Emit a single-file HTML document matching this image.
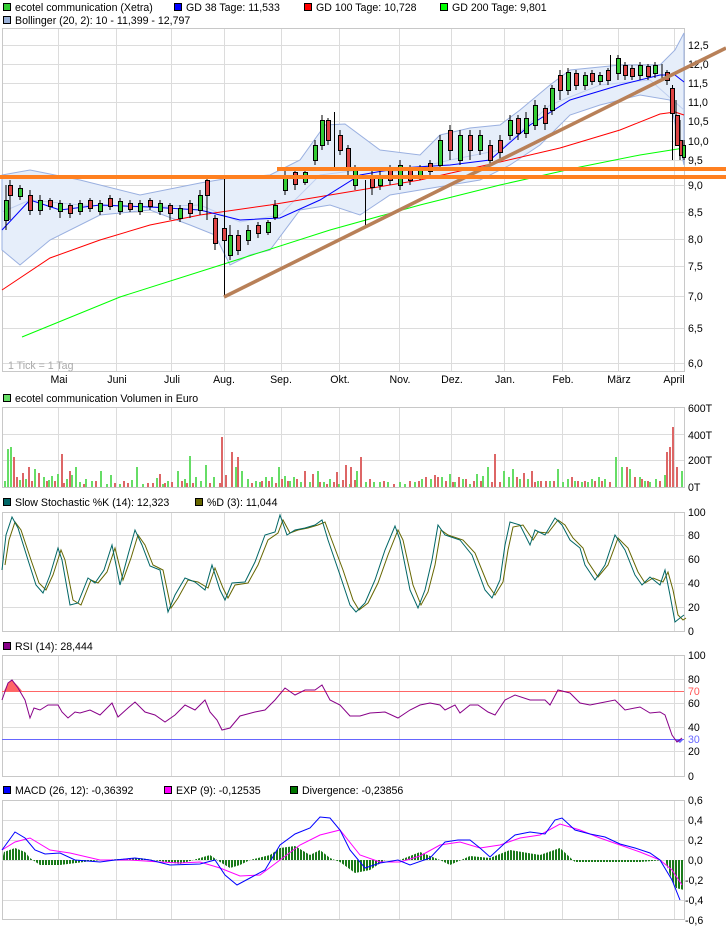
<!DOCTYPE html>
<html><head><meta charset="utf-8"><style>
body{margin:0;background:#fff;width:726px;height:928px;overflow:hidden;font-family:"Liberation Sans",sans-serif;}
svg{display:block}
text{font-family:"Liberation Sans",sans-serif;font-size:10.6px;fill:#000}
</style></head><body>
<svg width="726" height="928" viewBox="0 0 726 928" xmlns="http://www.w3.org/2000/svg">
<defs>
<pattern id="hs" width="3" height="10" patternUnits="userSpaceOnUse"><rect x="0" y="0" width="2" height="10" fill="#1a7a1a"/></pattern>
</defs>
<g stroke="#000" stroke-width="1">
<rect x="3.5" y="3.5" width="7" height="7" fill="#3c3"/>
<rect x="174.5" y="3.5" width="7" height="7" fill="#00f"/>
<rect x="304.5" y="3.5" width="7" height="7" fill="#f00"/>
<rect x="440.5" y="3.5" width="7" height="7" fill="#0f0"/>
<rect x="3.5" y="16.5" width="7" height="7" fill="#9ab0d8"/>
<rect x="3.5" y="394.5" width="7" height="7" fill="#6d6"/>
<rect x="3.5" y="498.5" width="7" height="7" fill="#066"/>
<rect x="195.5" y="498.5" width="7" height="7" fill="#660"/>
<rect x="3.5" y="642.5" width="7" height="7" fill="#808"/>
<rect x="3.5" y="786.5" width="7" height="7" fill="#00f"/>
<rect x="164.5" y="786.5" width="7" height="7" fill="#f0f"/>
<rect x="290.5" y="786.5" width="7" height="7" fill="#070"/>
</g>
<text x="15" y="11">ecotel communication (Xetra)</text>
<text x="186" y="11">GD 38 Tage: 11,533</text>
<text x="316" y="11">GD 100 Tage: 10,728</text>
<text x="452" y="11">GD 200 Tage: 9,801</text>
<text x="15" y="24">Bollinger (20, 2): 10 - 11,399 - 12,797</text>
<text x="15" y="402">ecotel communication Volumen in Euro</text>
<text x="15" y="506">Slow Stochastic %K (14): 12,323</text>
<text x="207" y="506">%D (3): 11,044</text>
<text x="15" y="650">RSI (14): 28,444</text>
<text x="15" y="794">MACD (26, 12): -0,36392</text>
<text x="176" y="794">EXP (9): -0,12535</text>
<text x="302" y="794">Divergence: -0,23856</text>

<g stroke="#dcdcdc" stroke-width="1" fill="none">
<path d="M58.5 28V372M116.5 28V372M171.5 28V372M224.5 28V372M281.5 28V372M339.5 28V372M399.5 28V372M451.5 28V372M504.5 28V372M562.5 28V372M618.5 28V372M674.5 28V372"/>
<path d="M2 45.5H684M2 64.5H684M2 83.5H684M2 102.5H684M2 121.5H684M2 141.5H684M2 160.5H684M2 185.5H684M2 212.5H684M2 239.5H684M2 266.5H684M2 296.5H684M2 328.5H684M2 363.5H684"/>
<path d="M58.5 407V487M116.5 407V487M171.5 407V487M224.5 407V487M281.5 407V487M339.5 407V487M399.5 407V487M451.5 407V487M504.5 407V487M562.5 407V487M618.5 407V487M674.5 407V487M2 434.5H684M2 460.5H684"/>
<path d="M58.5 512V631M116.5 512V631M171.5 512V631M224.5 512V631M281.5 512V631M339.5 512V631M399.5 512V631M451.5 512V631M504.5 512V631M562.5 512V631M618.5 512V631M674.5 512V631M2 535.5H684M2 559.5H684M2 583.5H684M2 607.5H684"/>
<path d="M58.5 655V776M116.5 655V776M171.5 655V776M224.5 655V776M281.5 655V776M339.5 655V776M399.5 655V776M451.5 655V776M504.5 655V776M562.5 655V776M618.5 655V776M674.5 655V776M2 679.5H684M2 703.5H684M2 727.5H684M2 751.5H684"/>
<path d="M58.5 800V919M116.5 800V919M171.5 800V919M224.5 800V919M281.5 800V919M339.5 800V919M399.5 800V919M451.5 800V919M504.5 800V919M562.5 800V919M618.5 800V919M674.5 800V919M2 820.5H684M2 840.5H684M2 880.5H684M2 900.5H684"/>
</g>
<g stroke="#c8c8c8" fill="none">
<rect x="2.5" y="28.5" width="682" height="343"/>
<rect x="2.5" y="407.5" width="682" height="80"/>
<rect x="2.5" y="512.5" width="682" height="119"/>
<rect x="2.5" y="655.5" width="682" height="121"/>
<rect x="2.5" y="800.5" width="682" height="119"/>
</g>

<g>
<text x="688" y="49">12,5</text><text x="688" y="68">12,0</text><text x="688" y="87">11,5</text><text x="688" y="106">11,0</text><text x="688" y="125">10,5</text><text x="688" y="145">10,0</text><text x="688" y="164">9,5</text><text x="688" y="189">9,0</text><text x="688" y="216">8,5</text><text x="688" y="243">8,0</text><text x="688" y="270">7,5</text><text x="688" y="300">7,0</text><text x="688" y="332">6,5</text><text x="688" y="367">6,0</text>
<text x="688" y="412">600T</text><text x="688" y="439">400T</text><text x="688" y="464">200T</text><text x="688" y="491">0T</text>
<text x="688" y="516">100</text><text x="688" y="539">80</text><text x="688" y="563">60</text><text x="688" y="587">40</text><text x="688" y="611">20</text><text x="688" y="635">0</text>
<text x="688" y="659">100</text><text x="688" y="683">80</text><text x="688" y="695" style="fill:#f55">70</text><text x="688" y="707">60</text><text x="688" y="731">40</text><text x="688" y="743" style="fill:#66f">30</text><text x="688" y="755">20</text><text x="688" y="780">0</text>
<text x="688" y="804">0,6</text><text x="688" y="824">0,4</text><text x="688" y="844">0,2</text><text x="688" y="864">0,0</text><text x="685" y="884">-0,2</text><text x="685" y="904">-0,4</text><text x="685" y="924">-0,6</text>
</g>
<g text-anchor="middle">
<text x="59" y="383">Mai</text><text x="117" y="383">Juni</text><text x="172" y="383">Juli</text><text x="224" y="383">Aug.</text><text x="281" y="383">Sep.</text><text x="340" y="383">Okt.</text><text x="400" y="383">Nov.</text><text x="452" y="383">Dez.</text><text x="505" y="383">Jan.</text><text x="563" y="383">Feb.</text><text x="619" y="383">März</text><text x="674" y="383">April</text>
</g>
<text x="8" y="369" style="fill:#aaa">1 Tick = 1 Tag</text>

<polygon fill="#e6eefa" stroke="#9ab0e0" stroke-width="1" points="2,175 30,170 80,180 140,195 200,183 230,178 270,175 300,160 325,125 345,124 380,150 420,155 440,135 470,128 500,125 520,110 550,85 570,70 620,65 660,65 675,50 684,33 684,165 670,100 640,95 600,105 570,115 540,145 510,165 480,180 450,185 420,190 390,195 360,215 330,205 300,210 270,250 250,255 230,265 215,235 190,225 150,210 100,215 50,240 20,265 2,250"/>
<polyline fill="none" stroke="#c0d0f0" points="2,212 30,200 80,205 140,207 200,205 240,222 280,215 320,175 360,170 400,172 450,160 500,150 550,105 600,85 650,80 684,110"/>
<polyline fill="none" stroke="#0f0" points="22,337 120,297 224,264 330,230 420,205 500,185 580,167 640,155 684,148"/>
<polyline fill="none" stroke="#f00" points="2,290 50,258 100,240 150,225 200,215 270,205 330,195 420,180 500,162 560,148 620,130 660,114 675,112 684,115"/>
<polyline fill="none" stroke="#00f" points="2,230 30,200 60,210 100,205 150,207 200,210 240,220 280,218 320,200 360,175 400,168 450,165 490,160 530,125 570,100 620,85 660,75 675,75 684,82"/>
<g stroke="#000" stroke-width="1">
<path d="M224.5 177V297M365.5 180V225M334.5 112V170M672.5 85V160M610.5 55V80"/>
<path d="M6 230V185M10 220V180M20 200V185M30 215V190M40 215V195M50 210V198M60 218V200M70 218V203M80 215V200M90 212V198M100 215V200M110 210V195M120 215V198M130 212V200M140 215V200M150 210V198M160 215V200M170 220V203M180 222V205M190 218V200M200 215V190M207 220V178M215 250V215M230 260V225M238 255V230M248 245V225M258 238V222M268 235V220M275 220V200M285 195V170M295 190V170M305 185V168M315 165V140M322 150V115M328 145V118M340 155V130M348 175V145M355 190V165M372 195V170M380 190V170M390 185V165M400 190V160M410 185V165M420 180V165M430 175V160M440 170V135M450 160V125M460 165V130M470 160V130M480 155V130M490 165V140M500 160V135M510 140V115M518 140V115M526 138V112M535 130V100M545 130V105M552 115V85M560 100V70M568 95V68M576 90V70M585 90V72M592 85V70M600 85V72M608 85V68M618 80V55M625 80V62M632 80V65M640 80V62M648 80V64M655 78V62M662 80V64M667 85V70M676 130V100M680 160V120M684 160V140"/>
</g>
<g stroke="#000" stroke-width="1">
<g fill="#3c3">
<rect x="4.5" y="200.5" width="4" height="20"/><rect x="18.5" y="188.5" width="4" height="8"/><rect x="38.5" y="200.5" width="4" height="10"/><rect x="58.5" y="203.5" width="4" height="8"/><rect x="78.5" y="203.5" width="4" height="8"/><rect x="98.5" y="203.5" width="4" height="8"/><rect x="118.5" y="201.5" width="4" height="10"/><rect x="138.5" y="203.5" width="4" height="8"/><rect x="158.5" y="203.5" width="4" height="8"/><rect x="178.5" y="208.5" width="4" height="10"/><rect x="198.5" y="195.5" width="4" height="15"/><rect x="228.5" y="235.5" width="4" height="20"/><rect x="246.5" y="230.5" width="4" height="10"/><rect x="266.5" y="222.5" width="4" height="10"/><rect x="273.5" y="205.5" width="4" height="12"/><rect x="283.5" y="175.5" width="4" height="15"/><rect x="303.5" y="172.5" width="4" height="10"/><rect x="313.5" y="145.5" width="4" height="15"/><rect x="320.5" y="120.5" width="4" height="25"/><rect x="353.5" y="170.5" width="4" height="15"/><rect x="378.5" y="175.5" width="4" height="10"/><rect x="398.5" y="165.5" width="4" height="20"/><rect x="418.5" y="168.5" width="4" height="8"/><rect x="438.5" y="140.5" width="4" height="25"/><rect x="458.5" y="135.5" width="4" height="25"/><rect x="478.5" y="135.5" width="4" height="15"/><rect x="508.5" y="120.5" width="4" height="15"/><rect x="524.5" y="118.5" width="4" height="15"/><rect x="533.5" y="105.5" width="4" height="20"/><rect x="550.5" y="88.5" width="4" height="22"/><rect x="566.5" y="72.5" width="4" height="18"/><rect x="583.5" y="75.5" width="4" height="10"/><rect x="598.5" y="75.5" width="4" height="6"/><rect x="616.5" y="58.5" width="4" height="15"/><rect x="638.5" y="65.5" width="4" height="10"/><rect x="653.5" y="65.5" width="4" height="8"/><rect x="682.5" y="145.5" width="3" height="12"/>
</g>
<g fill="#d44">
<rect x="8.5" y="185.5" width="4" height="10"/><rect x="28.5" y="195.5" width="4" height="15"/><rect x="48.5" y="200.5" width="4" height="6"/><rect x="68.5" y="205.5" width="4" height="8"/><rect x="88.5" y="200.5" width="4" height="8"/><rect x="108.5" y="198.5" width="4" height="8"/><rect x="128.5" y="203.5" width="4" height="6"/><rect x="148.5" y="200.5" width="4" height="6"/><rect x="168.5" y="205.5" width="4" height="8"/><rect x="188.5" y="203.5" width="4" height="10"/><rect x="205.5" y="180.5" width="4" height="15"/><rect x="213.5" y="218.5" width="4" height="25"/><rect x="222.5" y="228.5" width="4" height="12"/><rect x="236.5" y="235.5" width="4" height="15"/><rect x="256.5" y="225.5" width="4" height="8"/><rect x="293.5" y="172.5" width="4" height="12"/><rect x="326.5" y="120.5" width="4" height="20"/><rect x="338.5" y="135.5" width="4" height="15"/><rect x="346.5" y="148.5" width="4" height="20"/><rect x="370.5" y="175.5" width="4" height="12"/><rect x="388.5" y="170.5" width="4" height="10"/><rect x="408.5" y="168.5" width="4" height="12"/><rect x="428.5" y="163.5" width="4" height="8"/><rect x="448.5" y="130.5" width="4" height="20"/><rect x="468.5" y="135.5" width="4" height="15"/><rect x="488.5" y="145.5" width="4" height="15"/><rect x="498.5" y="140.5" width="4" height="12"/><rect x="516.5" y="118.5" width="4" height="15"/><rect x="543.5" y="108.5" width="4" height="15"/><rect x="558.5" y="75.5" width="4" height="15"/><rect x="574.5" y="73.5" width="4" height="12"/><rect x="590.5" y="73.5" width="4" height="8"/><rect x="606.5" y="70.5" width="4" height="10"/><rect x="623.5" y="65.5" width="4" height="10"/><rect x="630.5" y="68.5" width="4" height="8"/><rect x="646.5" y="66.5" width="4" height="10"/><rect x="665.5" y="72.5" width="4" height="8"/><rect x="670.5" y="88.5" width="4" height="25"/><rect x="675.5" y="115.5" width="4" height="30"/><rect x="679.5" y="140.5" width="3" height="15"/>
</g>
</g>
<line x1="224" y1="297" x2="726" y2="48" stroke="#b88058" stroke-width="3.5"/>
<rect x="0" y="175" width="726" height="4" fill="#ff8020"/>
<rect x="277" y="167" width="449" height="4" fill="#ff8020"/>

<path fill="none" stroke="#6d6" stroke-width="2" d="M5 487v-6M8 487v-38M11 487v-40M20 487v-7M26 487v-8M35 487v-18M44 487v-10M49 487v-7M52 487v-11M58 487v-13M67 487v-8M72 487v-12M76 487v-20M80 487v-5M86 487v-8M92 487v-6M101 487v-16M107 487v-3M111 487v-12M120 487v-3M132 487v-7M137 487v-20M143 487v-3M157 487v-9M163 487v-3M168 487v-6M178 487v-16M185 487v-8M190 487v-31M196 487v-10M201 487v-6M206 487v-22M214 487v-10M236 487v-20M242 487v-16M248 487v-8M256 487v-6M260 487v-5M266 487v-10M272 487v-10M279 487v-20M285 487v-11M290 487v-6M294 487v-10M301 487v-5M310 487v-5M318 487v-16M324 487v-5M330 487v-8M339 487v-3M350 487v-3M357 487v-16M366 487v-5M374 487v-5M380 487v-5M388 487v-5M400 487v-5M405 487v-3M415 487v-5M422 487v-8M431 487v-8M442 487v-10M450 487v-13M455 487v-5M463 487v-8M470 487v-3M477 487v-13M483 487v-11M488 487v-20M504 487v-16M509 487v-10M513 487v-18M520 487v-8M528 487v-8M538 487v-6M550 487v-6M558 487v-18M563 487v-5M568 487v-8M575 487v-6M582 487v-5M588 487v-5M592 487v-8M599 487v-10M605 487v-8M616 487v-30M622 487v-20M630 487v-18M640 487v-10M645 487v-6M650 487v-5M656 487v-8M665 487v-12M682 487v-16"/>
<path fill="none" stroke="#d66" stroke-width="2" d="M14 487v-30M17 487v-10M23 487v-14M29 487v-20M32 487v-6M39 487v-14M47 487v-6M55 487v-6M62 487v-33M64 487v-4M70 487v-16M84 487v-3M96 487v-6M115 487v-4M124 487v-6M128 487v-4M148 487v-4M153 487v-4M160 487v-13M165 487v-4M172 487v-5M182 487v-6M187 487v-4M193 487v-4M210 487v-4M220 487v-4M222 487v-50M226 487v-12M232 487v-35M238 487v-30M252 487v-4M262 487v-6M269 487v-6M276 487v-4M282 487v-8M288 487v-6M297 487v-8M305 487v-16M313 487v-13M320 487v-5M327 487v-3M334 487v-5M337 487v-15M343 487v-7M346 487v-22M351 487v-20M355 487v-7M361 487v-30M370 487v-8M384 487v-6M394 487v-3M410 487v-6M419 487v-6M426 487v-10M435 487v-12M438 487v-10M446 487v-6M453 487v-5M459 487v-10M466 487v-8M474 487v-6M481 487v-6M492 487v-5M495 487v-33M500 487v-5M517 487v-10M524 487v-14M532 487v-16M535 487v-5M541 487v-6M546 487v-6M554 487v-6M572 487v-10M578 487v-6M585 487v-6M595 487v-6M602 487v-6M610 487v-5M627 487v-20M635 487v-10M642 487v-8M648 487v-6M660 487v-6M667 487v-35M670 487v-40M673 487v-60M677 487v-20"/>

<polyline fill="none" stroke="#660" points="5,565 9,540 15,522 21,530 31,560 39,583 46,590 53,575 61,550 65,560 73,600 81,605 91,580 98,583 107,572 115,548 123,580 131,558 138,535 145,545 153,565 163,570 171,608 178,598 188,580 198,582 208,588 215,568 223,588 228,598 235,585 248,583 258,565 268,540 278,533 283,520 290,533 298,530 308,528 318,525 325,522 331,538 343,570 353,600 359,610 368,603 378,583 388,555 398,530 403,540 413,585 421,605 428,592 435,565 441,530 448,535 463,540 475,553 488,585 495,595 503,582 508,550 513,527 523,525 533,540 538,532 548,533 558,520 565,525 573,538 583,548 588,562 598,577 608,565 618,538 628,548 638,572 645,583 653,578 663,582 668,572 673,590 678,615 683,620 686,618"/>
<polyline fill="none" stroke="#066" points="2,570 6,535 12,517 18,528 28,560 36,585 43,593 50,575 58,548 62,560 70,605 78,603 88,578 95,583 104,570 112,545 120,585 128,555 135,530 142,545 150,566 160,570 168,612 175,595 185,578 195,582 205,590 212,565 220,590 225,600 232,583 245,582 255,562 265,535 275,532 280,515 287,535 295,530 305,528 315,525 322,520 328,540 340,575 350,605 356,612 365,603 375,580 385,550 395,526 400,540 410,590 418,608 425,590 432,560 438,525 445,535 460,540 472,555 485,590 492,598 500,580 505,545 510,522 520,525 530,545 535,530 545,535 555,518 562,525 570,540 580,548 585,565 595,580 605,565 615,535 625,550 635,575 642,585 650,577 660,585 665,570 670,595 675,622 680,618 684,615"/>

<line x1="2" y1="691.5" x2="684" y2="691.5" stroke="#f66"/>
<line x1="2" y1="739.5" x2="684" y2="739.5" stroke="#66f"/>
<polygon fill="#f66" points="4,691 8,683 12,680 18,686 22,691"/>
<polygon fill="#66f" points="674,739 677,741 680,743 684,739"/>
<polyline fill="none" stroke="#808" points="2,700 8,683 12,680 18,688 25,700 30,718 34,708 40,710 48,705 58,705 62,712 68,718 75,712 80,713 90,710 100,715 112,703 118,717 128,708 135,702 145,712 155,715 165,722 175,715 185,705 195,710 205,700 210,712 217,720 222,730 230,728 240,716 255,712 265,710 275,700 285,688 295,695 305,690 315,690 322,685 330,700 340,705 350,716 360,716 370,713 385,712 398,718 410,710 420,705 430,703 440,705 445,710 455,705 460,713 470,705 478,705 488,712 495,715 505,700 515,695 530,700 545,700 550,705 558,690 570,693 580,703 590,705 600,703 615,700 625,710 640,707 650,713 660,712 665,715 672,735 677,742 682,738"/>

<line x1="2" y1="860.5" x2="684" y2="860.5" stroke="#dcdcdc"/>
<polygon fill="url(#hs)" points="2,860 4,852 15,848 25,852 30,858 40,865 60,865 100,860 140,858 180,864 200,858 210,855 220,862 230,868 240,865 250,860 270,855 280,848 295,846 310,855 320,850 330,858 340,862 355,873 370,870 385,860 400,860 420,852 440,860 450,865 470,856 490,858 510,850 540,855 560,848 575,862 620,862 640,862 665,860 670,875 676,888 684,890 684,860"/>
<polyline fill="none" stroke="#f0f" points="2,850 15,842 30,838 50,850 70,853 100,860 130,860 160,862 180,863 200,862 220,868 240,876 260,875 280,860 300,845 320,835 340,830 360,855 380,862 400,862 420,856 440,845 460,842 480,848 500,845 520,838 540,835 560,824 580,830 600,838 620,845 640,852 660,860 672,870 682,885"/>
<polyline fill="none" stroke="#00f" points="2,850 15,832 25,838 35,850 45,854 60,853 75,860 100,862 115,860 135,858 150,860 170,865 200,864 215,860 225,875 237,885 250,878 265,870 280,845 295,834 310,828 320,817 330,818 340,830 350,850 365,868 380,863 398,860 410,865 430,858 445,842 458,840 470,840 480,848 490,857 505,843 515,835 530,832 545,834 555,820 562,818 575,830 590,834 605,837 620,844 635,848 650,853 660,860 672,880 680,900"/>
</svg>
</body></html>
